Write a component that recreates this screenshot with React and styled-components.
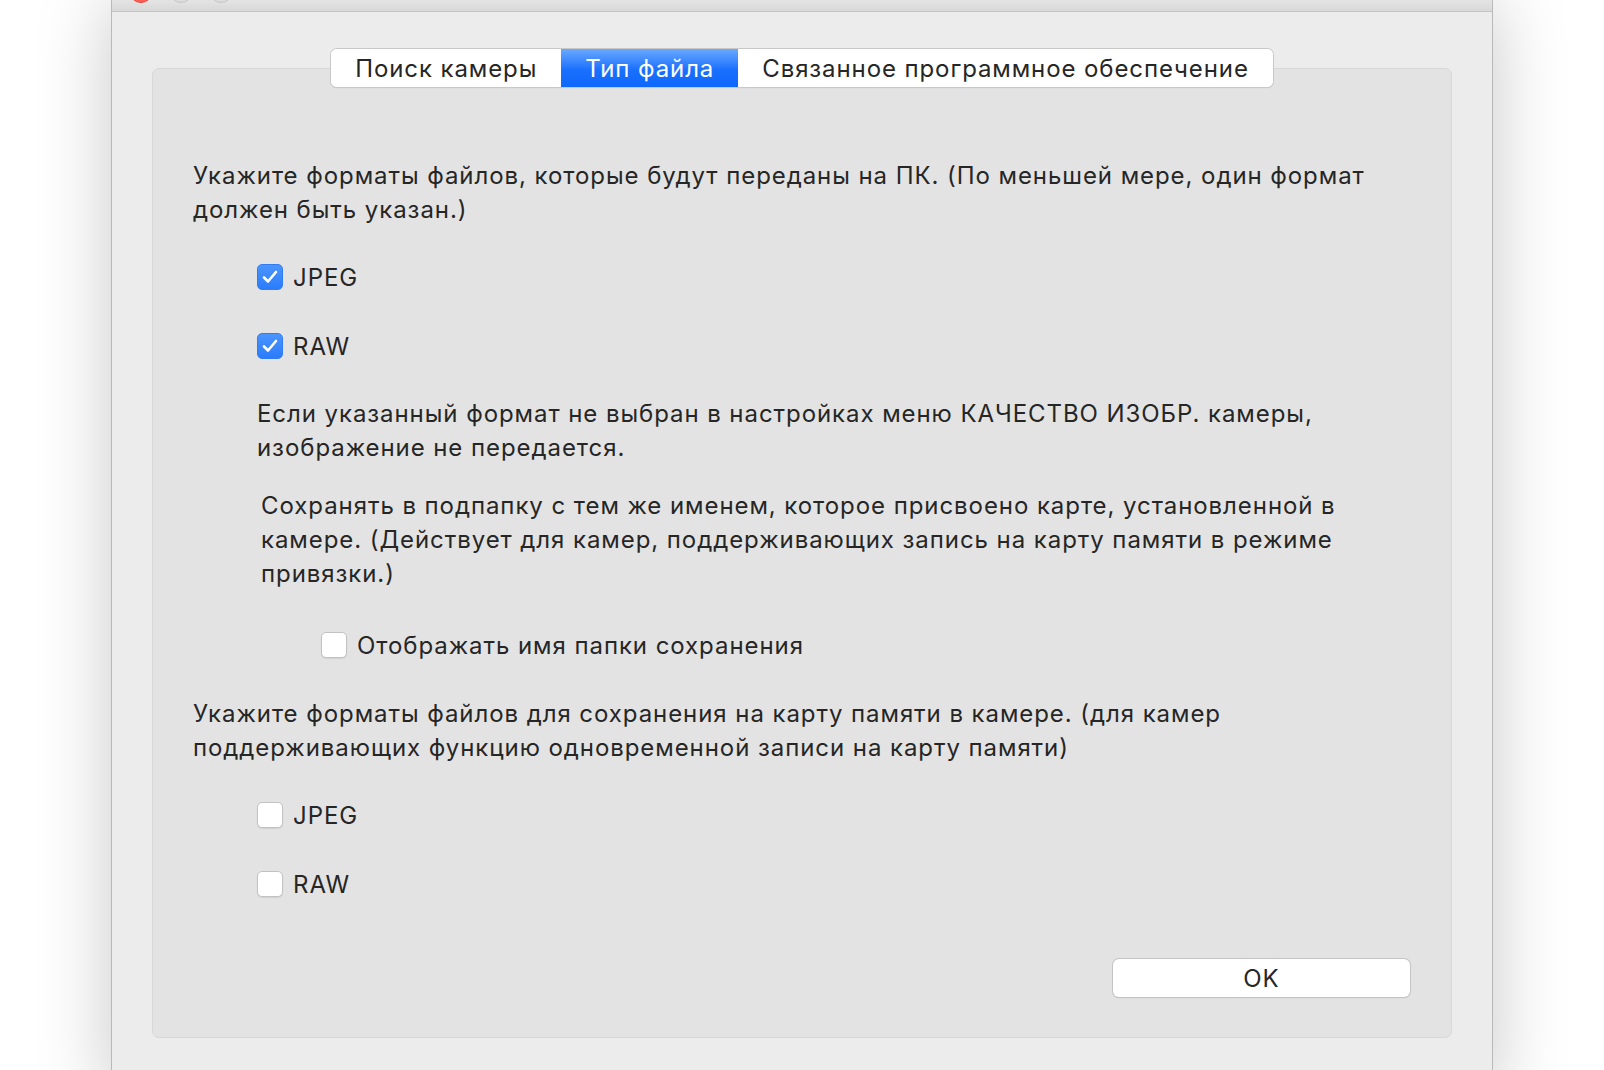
import React, { useState } from "react";
import styled, { createGlobalStyle } from "styled-components";

const GlobalStyle = createGlobalStyle`
  html, body {
    margin: 0;
    padding: 0;
    background: #ffffff;
  }
  body {
    font-family: Inter, "Noto Sans", "Liberation Sans", sans-serif;
    color: #262626;
  }
`;

const Page = styled.div`
  width: 1604px;
  height: 1070px;
  overflow: hidden;
  display: flex;
  justify-content: flex-start;
  background: #ffffff;
`;

const Window = styled.div`
  margin-left: 111px;
  width: 1382px;
  height: 1100px;
  background: #ececec;
  border-left: 1px solid #b9b9b9;
  border-right: 1px solid #b9b9b9;
  box-sizing: border-box;
  box-shadow: 0 0 70px rgba(0, 0, 0, 0.22);
  display: flex;
  flex-direction: column;
`;

const TitleBar = styled.div`
  height: 12px;
  flex: none;
  background: linear-gradient(#e4e4e4, #d8d8d8);
  border-bottom: 1px solid #c4c4c4;
  box-sizing: border-box;
  overflow: hidden;
  display: flex;
  align-items: flex-start;
  gap: 16px;
  padding-left: 17px;
`;

const Light = styled.span`
  width: 24px;
  height: 24px;
  margin-top: -21px;
  border-radius: 50%;
  flex: none;
  background: ${(p) => p.$color};
  border: 1px solid ${(p) => p.$edge};
  box-sizing: border-box;
`;

const Content = styled.div`
  padding: 37px 40px 0;
  display: flex;
  flex-direction: column;
`;

const TabBar = styled.div`
  display: flex;
  justify-content: center;
  position: relative;
  z-index: 1;
`;

const Tabs = styled.div`
  display: flex;
  height: 38px;
  border-radius: 6px;
  background: #ffffff;
  box-shadow: 0 0 0 1px #c8c8c8, 0 1px 1px rgba(0, 0, 0, 0.18);
  overflow: hidden;
`;

const Tab = styled.button`
  border: none;
  margin: 0;
  padding: 0 24px;
  height: 38px;
  font-family: inherit;
  font-size: 24px;
  letter-spacing: 0.9px;
  color: ${(p) => (p.$active ? "#ffffff" : "#262626")};
  background: ${(p) =>
    p.$active ? "linear-gradient(#6aa9ff, #1a70fd 55%, #0d67fc)" : "#ffffff"};
  cursor: default;
`;

const Panel = styled.div`
  margin-top: -19px;
  height: 970px;
  box-sizing: border-box;
  background: #e3e3e3;
  border: 1px solid #d8d8d8;
  border-radius: 7px;
  padding: 90px 41px 40px 40px;
  display: flex;
  flex-direction: column;
`;

const Text = styled.p`
  margin: ${(p) => p.$top || 0}px 0 0 ${(p) => p.$indent || 0}px;
  font-size: 24px;
  line-height: 34px;
  letter-spacing: 0.93px;
`;

const Row = styled.label`
  display: flex;
  align-items: center;
  gap: 10px;
  height: 34px;
  margin: ${(p) => p.$top || 0}px 0 0 ${(p) => p.$indent || 0}px;
  font-size: 24px;
  letter-spacing: 0.93px;
`;

const Box = styled.span`
  width: 26px;
  height: 26px;
  box-sizing: border-box;
  border-radius: 5px;
  flex: none;
  display: flex;
  align-items: center;
  justify-content: center;
  background: ${(p) => (p.$checked ? "linear-gradient(#4b95ff, #2b7cfb)" : "#ffffff")};
  border: 1px solid ${(p) => (p.$checked ? "#2f7cf3" : "#c2c2c2")};
  box-shadow: ${(p) => (p.$checked ? "none" : "0 1px 1px rgba(0,0,0,0.08)")};
`;

const Footer = styled.div`
  margin-top: 58px;
  display: flex;
  justify-content: flex-end;
`;

const OkButton = styled.button`
  width: 297px;
  height: 38px;
  border: none;
  border-radius: 6px;
  background: #ffffff;
  box-shadow: 0 0 0 1px #c4c4c4, 0 1px 1px rgba(0, 0, 0, 0.2);
  font-family: inherit;
  font-size: 24px;
  letter-spacing: 0.9px;
  color: #262626;
  cursor: default;
`;

const Check = () => (
  <svg width="18" height="16" viewBox="0 0 18 16">
    <path
      d="M3 8.5 L7 12.5 L15 3"
      fill="none"
      stroke="#ffffff"
      strokeWidth="2.6"
      strokeLinecap="round"
      strokeLinejoin="round"
    />
  </svg>
);

const CheckRow = ({ label, checked, onToggle, top, indent }) => (
  <Row $top={top} $indent={indent} onClick={onToggle}>
    <Box $checked={checked}>{checked && <Check />}</Box>
    {label}
  </Row>
);

const App = () => {
  const [tab, setTab] = useState(1);
  const [pcJpeg, setPcJpeg] = useState(true);
  const [pcRaw, setPcRaw] = useState(true);
  const [showFolder, setShowFolder] = useState(false);
  const [cardJpeg, setCardJpeg] = useState(false);
  const [cardRaw, setCardRaw] = useState(false);

  const tabs = ["Поиск камеры", "Тип файла", "Связанное программное обеспечение"];

  return (
    <>
      <GlobalStyle />
      <Page>
        <Window>
          <TitleBar>
            <Light $color="#fd5f57" $edge="#e2463f" />
            <Light $color="#dcdcdc" $edge="#c6c6c6" />
            <Light $color="#dcdcdc" $edge="#c6c6c6" />
          </TitleBar>
          <Content>
            <TabBar>
              <Tabs>
                {tabs.map((t, i) => (
                  <Tab key={t} $active={tab === i} onClick={() => setTab(i)}>
                    {t}
                  </Tab>
                ))}
              </Tabs>
            </TabBar>
            <Panel>
              <Text>
                Укажите форматы файлов, которые будут переданы на ПК. (По меньшей мере, один формат
                <br />
                должен быть указан.)
              </Text>
              <CheckRow label="JPEG" checked={pcJpeg} onToggle={() => setPcJpeg(!pcJpeg)} top={33} indent={64} />
              <CheckRow label="RAW" checked={pcRaw} onToggle={() => setPcRaw(!pcRaw)} top={35} indent={64} />
              <Text $top={34} $indent={64}>
                Если указанный формат не выбран в настройках меню КАЧЕСТВО ИЗОБР. камеры,
                <br />
                изображение не передается.
              </Text>
              <Text $top={24} $indent={68}>
                Сохранять в подпапку с тем же именем, которое присвоено карте, установленной в
                <br />
                камере. (Действует для камер, поддерживающих запись на карту памяти в режиме
                <br />
                привязки.)
              </Text>
              <CheckRow
                label="Отображать имя папки сохранения"
                checked={showFolder}
                onToggle={() => setShowFolder(!showFolder)}
                top={37}
                indent={128}
              />
              <Text $top={35}>
                Укажите форматы файлов для сохранения на карту памяти в камере. (для камер
                <br />
                поддерживающих функцию одновременной записи на карту памяти)
              </Text>
              <CheckRow label="JPEG" checked={cardJpeg} onToggle={() => setCardJpeg(!cardJpeg)} top={33} indent={64} />
              <CheckRow label="RAW" checked={cardRaw} onToggle={() => setCardRaw(!cardRaw)} top={35} indent={64} />
              <Footer>
                <OkButton>OK</OkButton>
              </Footer>
            </Panel>
          </Content>
        </Window>
      </Page>
    </>
  );
};

export default App;
